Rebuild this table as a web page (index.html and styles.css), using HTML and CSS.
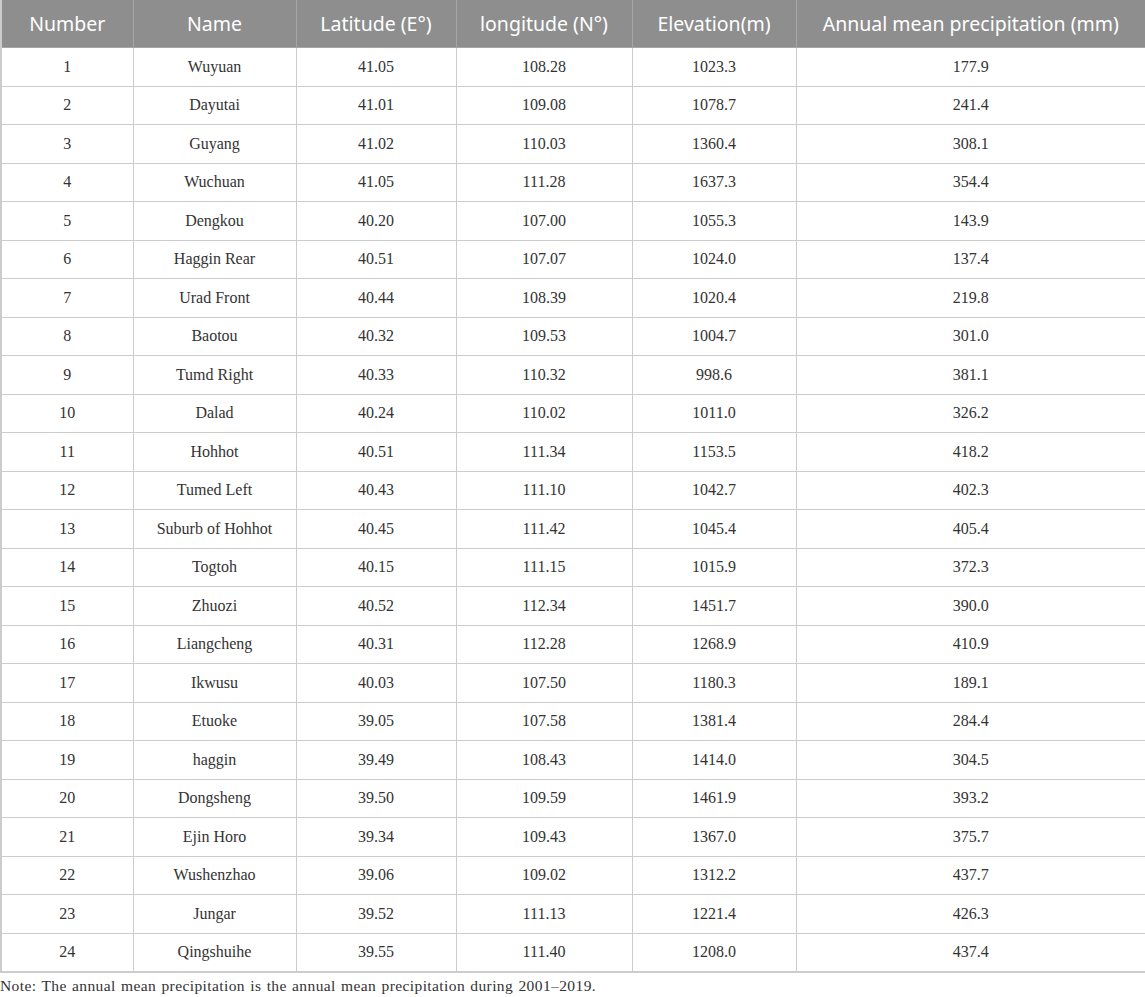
FILE: index.html
```html
<!DOCTYPE html>
<html>
<head>
<meta charset="utf-8">
<link rel="stylesheet" href="styles.css">
</head>
<body>
<table class="data">
<colgroup>
<col class="c1"><col class="c2"><col class="c3"><col class="c4"><col class="c5"><col class="c6">
</colgroup>
<thead>
<tr><th>Number</th><th>Name</th><th>Latitude (E°)</th><th>longitude (N°)</th><th>Elevation(m)</th><th>Annual mean precipitation (mm)</th></tr>
</thead>
<tbody>
<tr><td>1</td><td>Wuyuan</td><td>41.05</td><td>108.28</td><td>1023.3</td><td>177.9</td></tr>
<tr><td>2</td><td>Dayutai</td><td>41.01</td><td>109.08</td><td>1078.7</td><td>241.4</td></tr>
<tr><td>3</td><td>Guyang</td><td>41.02</td><td>110.03</td><td>1360.4</td><td>308.1</td></tr>
<tr><td>4</td><td>Wuchuan</td><td>41.05</td><td>111.28</td><td>1637.3</td><td>354.4</td></tr>
<tr><td>5</td><td>Dengkou</td><td>40.20</td><td>107.00</td><td>1055.3</td><td>143.9</td></tr>
<tr><td>6</td><td>Haggin Rear</td><td>40.51</td><td>107.07</td><td>1024.0</td><td>137.4</td></tr>
<tr><td>7</td><td>Urad Front</td><td>40.44</td><td>108.39</td><td>1020.4</td><td>219.8</td></tr>
<tr><td>8</td><td>Baotou</td><td>40.32</td><td>109.53</td><td>1004.7</td><td>301.0</td></tr>
<tr><td>9</td><td>Tumd Right</td><td>40.33</td><td>110.32</td><td>998.6</td><td>381.1</td></tr>
<tr><td>10</td><td>Dalad</td><td>40.24</td><td>110.02</td><td>1011.0</td><td>326.2</td></tr>
<tr><td>11</td><td>Hohhot</td><td>40.51</td><td>111.34</td><td>1153.5</td><td>418.2</td></tr>
<tr><td>12</td><td>Tumed Left</td><td>40.43</td><td>111.10</td><td>1042.7</td><td>402.3</td></tr>
<tr><td>13</td><td>Suburb of Hohhot</td><td>40.45</td><td>111.42</td><td>1045.4</td><td>405.4</td></tr>
<tr><td>14</td><td>Togtoh</td><td>40.15</td><td>111.15</td><td>1015.9</td><td>372.3</td></tr>
<tr><td>15</td><td>Zhuozi</td><td>40.52</td><td>112.34</td><td>1451.7</td><td>390.0</td></tr>
<tr><td>16</td><td>Liangcheng</td><td>40.31</td><td>112.28</td><td>1268.9</td><td>410.9</td></tr>
<tr><td>17</td><td>Ikwusu</td><td>40.03</td><td>107.50</td><td>1180.3</td><td>189.1</td></tr>
<tr><td>18</td><td>Etuoke</td><td>39.05</td><td>107.58</td><td>1381.4</td><td>284.4</td></tr>
<tr><td>19</td><td>haggin</td><td>39.49</td><td>108.43</td><td>1414.0</td><td>304.5</td></tr>
<tr><td>20</td><td>Dongsheng</td><td>39.50</td><td>109.59</td><td>1461.9</td><td>393.2</td></tr>
<tr><td>21</td><td>Ejin Horo</td><td>39.34</td><td>109.43</td><td>1367.0</td><td>375.7</td></tr>
<tr><td>22</td><td>Wushenzhao</td><td>39.06</td><td>109.02</td><td>1312.2</td><td>437.7</td></tr>
<tr><td>23</td><td>Jungar</td><td>39.52</td><td>111.13</td><td>1221.4</td><td>426.3</td></tr>
<tr><td>24</td><td>Qingshuihe</td><td>39.55</td><td>111.40</td><td>1208.0</td><td>437.4</td></tr>
</tbody>
</table>
<p class="note">Note: The annual mean precipitation is the annual mean precipitation during 2001–2019.</p>
</body>
</html>
```
FILE: styles.css
```css
html, body {
  margin: 0;
  padding: 0;
  background: #ffffff;
}
.data {
  width: 1145px;
  border-collapse: collapse;
  table-layout: fixed;
}
.c1 { width: 132px; }
.c2 { width: 163px; }
.c3 { width: 160px; }
.c4 { width: 176px; }
.c5 { width: 164px; }
.c6 { width: 350px; }
.data th {
  height: 47px;
  padding: 0;
  background: #8e8e8e;
  color: #ffffff;
  font-family: "Noto Sans", "Open Sans", sans-serif;
  font-size: 19.5px;
  font-weight: 400;
  text-align: center;
  border: 1px solid #a6a6a6;
  border-top: none;
}
.data td {
  height: 37.5px;
  padding: 0;
  text-align: center;
  font-family: "Liberation Serif", serif;
  font-size: 16px;
  color: #333333;
  border: 1px solid #cccccc;
}
.data tr td:first-child, .data tr th:first-child { border-left: 2px solid #cccccc; }
.data tr td:last-child, .data tr th:last-child { border-right: 2px solid #cccccc; }
.data tbody tr:last-child td { border-bottom: 2px solid #cccccc; }
.note {
  margin: 4px 0 0 0;
  font-family: "Liberation Serif", serif;
  font-size: 15.5px;
  letter-spacing: 0.4px;
  word-spacing: 1px;
  color: #333333;
}
```
